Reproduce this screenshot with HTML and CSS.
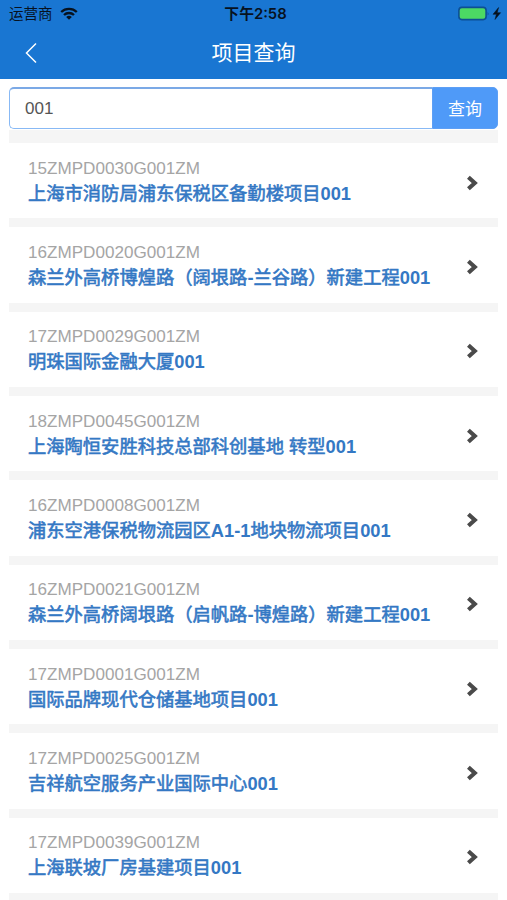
FILE: index.html
```
<!DOCTYPE html>
<html lang="zh-CN">
<head>
    <meta charset="UTF-8">
    <meta name="viewport" content="width=device-width, initial-scale=1.0">
    <title>项目查询</title>
    <link rel="stylesheet" href="styles.css">
</head>
<body>
    <svg class="sprite" aria-hidden="true">
        <symbol id="chevron" viewBox="0 0 12 16">
            <path d="M2.4 2.2 L8.8 8 L2.4 13.8" fill="none" stroke="#4a4a4a" stroke-width="4.1"/>
        </symbol>
    </svg>

    <header class="header">
        <div class="status-bar">
            <div class="status-left">
                <span class="carrier">运营商</span>
                <svg class="wifi" viewBox="0 0 18 13">
                    <g fill="none" stroke="#07121f" stroke-width="2.3">
                        <path d="M1.2 5 A11.2 11.2 0 0 1 16.8 5"/>
                        <path d="M4 8 A7.2 7.2 0 0 1 14 8"/>
                    </g>
                    <path d="M6.2 10 A4 4 0 0 1 11.8 10 L9 12.8 Z" fill="#07121f"/>
                </svg>
            </div>
            <span class="time">下午2:58</span>
            <div class="status-right">
                <svg class="battery" viewBox="0 0 44 16">
                    <rect x="0.9" y="1.4" width="27.2" height="12.2" rx="3" fill="#4cd964" stroke="#0d4f94" stroke-width="1.6"/>
                    <path d="M29.6 5.5 Q31.4 7.5 29.6 9.5 Z" fill="#0d4f94"/>
                    <path d="M40.6 1.5 L35 8.3 H38.4 L37 13.5 L42.6 6.7 H39.2 Z" fill="#07121f" stroke="#07121f" stroke-width="0.5"/>
                </svg>
            </div>
        </div>
        <div class="nav-bar">
            <svg class="back" viewBox="0 0 12 22">
                <path d="M11 1.5 L1.5 11 L11 20.5" fill="none" stroke="#fff" stroke-width="1.5"/>
            </svg>
            <h1 class="nav-title">项目查询</h1>
        </div>
    </header>

    <main class="content">
        <form class="search">
            <input class="search-input" type="text" value="001">
            <button class="search-btn" type="button">查询</button>
        </form>

        <ul class="project-list">
            <li class="project">
                <div class="project-info">
                    <div class="project-code">15ZMPD0030G001ZM</div>
                    <div class="project-name">上海市消防局浦东保税区备勤楼项目<b>001</b></div>
                </div>
                <svg class="arrow"><use href="#chevron"/></svg>
            </li>
            <li class="project">
                <div class="project-info">
                    <div class="project-code">16ZMPD0020G001ZM</div>
                    <div class="project-name">森兰外高桥博煌路（阔垠路<b>-</b>兰谷路）新建工程<b>001</b></div>
                </div>
                <svg class="arrow"><use href="#chevron"/></svg>
            </li>
            <li class="project">
                <div class="project-info">
                    <div class="project-code">17ZMPD0029G001ZM</div>
                    <div class="project-name">明珠国际金融大厦<b>001</b></div>
                </div>
                <svg class="arrow"><use href="#chevron"/></svg>
            </li>
            <li class="project">
                <div class="project-info">
                    <div class="project-code">18ZMPD0045G001ZM</div>
                    <div class="project-name">上海陶恒安胜科技总部科创基地 转型<b>001</b></div>
                </div>
                <svg class="arrow"><use href="#chevron"/></svg>
            </li>
            <li class="project">
                <div class="project-info">
                    <div class="project-code">16ZMPD0008G001ZM</div>
                    <div class="project-name">浦东空港保税物流园区<b>A1-1</b>地块物流项目<b>001</b></div>
                </div>
                <svg class="arrow"><use href="#chevron"/></svg>
            </li>
            <li class="project">
                <div class="project-info">
                    <div class="project-code">16ZMPD0021G001ZM</div>
                    <div class="project-name">森兰外高桥阔垠路（启帆路<b>-</b>博煌路）新建工程<b>001</b></div>
                </div>
                <svg class="arrow"><use href="#chevron"/></svg>
            </li>
            <li class="project">
                <div class="project-info">
                    <div class="project-code">17ZMPD0001G001ZM</div>
                    <div class="project-name">国际品牌现代仓储基地项目<b>001</b></div>
                </div>
                <svg class="arrow"><use href="#chevron"/></svg>
            </li>
            <li class="project">
                <div class="project-info">
                    <div class="project-code">17ZMPD0025G001ZM</div>
                    <div class="project-name">吉祥航空服务产业国际中心<b>001</b></div>
                </div>
                <svg class="arrow"><use href="#chevron"/></svg>
            </li>
            <li class="project">
                <div class="project-info">
                    <div class="project-code">17ZMPD0039G001ZM</div>
                    <div class="project-name">上海联坡厂房基建项目<b>001</b></div>
                </div>
                <svg class="arrow"><use href="#chevron"/></svg>
            </li>
        </ul>
    </main>
</body>
</html>
```

FILE: styles.css
```
* {
    box-sizing: border-box;
}
body {
    margin: 0;
    height: 900px;
    overflow: hidden;
    background: #fff;
    font-family: "Liberation Sans", "Noto Sans CJK SC", sans-serif;
}
.sprite {
    display: none;
}
.header {
    height: 79px;
    background: #1976d2;
}
.status-bar {
    display: grid;
    grid-template-columns: 1fr auto 1fr;
    align-items: center;
    height: 27px;
    padding: 0 5px 0 9px;
    color: #07121f;
}
.status-left {
    display: flex;
    align-items: center;
    gap: 7px;
}
.carrier {
    font-size: 14.5px;
    line-height: 20px;
}
.wifi {
    width: 18px;
    height: 13px;
}
.time {
    font-family: Inter, "Noto Sans CJK SC", sans-serif;
    font-size: 14.8px;
    font-weight: 600;
    line-height: 20px;
}
.status-right {
    display: flex;
    justify-content: flex-end;
}
.battery {
    width: 44px;
    height: 16px;
}
.nav-bar {
    display: grid;
    grid-template-columns: 60px 1fr 60px;
    align-items: center;
    height: 51px;
}
.back {
    width: 12px;
    height: 22px;
    margin-left: 25px;
}
.nav-title {
    margin: 0;
    padding-top: 1px;
    color: #fff;
    font-size: 21px;
    font-weight: 400;
    line-height: 30px;
    text-align: center;
}
.content {
    padding: 8px 9px 0;
}
.search {
    display: flex;
    height: 43px;
}
.search-input {
    flex: 1;
    min-width: 0;
    height: 42px;
    padding: 0 15px;
    border: 1.5px solid #88b9f5;
    border-top: 2px solid #7ba9e6;
    border-right: none;
    border-radius: 5px 0 0 5px;
    outline: none;
    color: #555;
    font-family: inherit;
    font-size: 17px;
}
.search-btn {
    width: 66px;
    height: 42px;
    padding: 0 0 2px;
    border: 1px solid #5d9ff5;
    border-radius: 0 5px 5px 0;
    background: #4f9af8;
    color: #fff;
    font-family: inherit;
    font-size: 17px;
}
.project-list {
    margin: 0;
    padding: 0;
    border-top: 13px solid #f5f5f5;
    list-style: none;
}
.project {
    display: flex;
    align-items: center;
    justify-content: space-between;
    height: 84.35px;
    padding: 4px 20px 0 19px;
    border-bottom: 9px solid #f5f5f5;
}
.project-info {
    padding-bottom: 2px;
}
.project-code {
    color: #a5a5a5;
    font-size: 17.1px;
    line-height: 24px;
}
.project-name {
    color: #3478c4;
    font-size: 18.3px;
    line-height: 26px;
    white-space: nowrap;
    -webkit-text-stroke: 0.6px #3478c4;
}
.project-name b {
    -webkit-text-stroke: 0;
}
.arrow {
    width: 12px;
    height: 16px;
}
```
